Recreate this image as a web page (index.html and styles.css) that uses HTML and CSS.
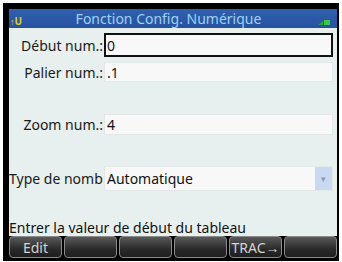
FILE: index.html
```html
<!DOCTYPE html>
<html lang="fr">
<head>
    <meta charset="UTF-8">
    <title>Fonction Config. Numérique</title>
    <link rel="stylesheet" href="styles.css">
</head>
<body>
    <div class="frame">
        <div class="screen">
            <div class="header">
                <span class="flags"><span class="shift">&#8593;</span>U</span>
                <span class="title">Fonction Config. Numérique</span>
                <svg class="batt" width="14" height="8" viewBox="0 0 14 8">
                    <polygon points="1,7 6,3 6,7" fill="#27a43c"/>
                    <rect x="7" y="2" width="6" height="5" fill="#3cc84a"/>
                </svg>
            </div>

            <div class="form">
                <div class="row row-first">
                    <label class="lbl">Début num.:</label>
                    <div class="field active">0</div>
                </div>
                <div class="row row-second">
                    <label class="lbl">Palier num.:</label>
                    <div class="field">.1</div>
                </div>
                <div class="row row-third">
                    <label class="lbl">Zoom num.:</label>
                    <div class="field">4</div>
                </div>
                <div class="row row-fourth">
                    <label class="lbl lbl-left">Type de nomb</label>
                    <div class="field select">
                        <span class="value">Automatique</span>
                        <span class="drop">&#9662;</span>
                    </div>
                </div>
            </div>

            <div class="status">Entrer la valeur de début du tableau</div>

            <div class="softkeys">
                <div class="key">Edit</div>
                <div class="key"></div>
                <div class="key"></div>
                <div class="key"></div>
                <div class="key">TRAC&#8594;</div>
                <div class="key"></div>
            </div>
        </div>
    </div>
</body>
</html>
```

FILE: styles.css
```css
/* General Styling */
body {
    margin: 0;
    background: #ffffff;
    font-family: 'Noto Sans', 'Open Sans', sans-serif;
}

.frame {
    margin: 3px 0 0 3px;
    width: 328px;
    background: #000;
    border-style: solid;
    border-color: #000;
    border-width: 6px 2px 3px 6px;
}

.screen {
    height: 249px;
    background: #e7efef;
    display: flex;
    flex-direction: column;
}

/* Header */
.header {
    height: 19px;
    background: linear-gradient(to bottom, #3160ae, #2652a0);
    display: flex;
    align-items: center;
    position: relative;
}

.flags {
    font-size: 10px;
    font-weight: bold;
    color: #d8d020;
    padding-left: 1px;
    padding-top: 4px;
    width: 60px;
}

.shift {
    font-size: 9px;
}

.title {
    flex: 1;
    text-align: center;
    color: #9fd2f6;
    font-size: 14px;
    margin-left: -50px;
}

.batt {
    margin: 6px 6px 0 0;
}

/* Form Styling */
.form {
    display: flex;
    flex-direction: column;
}

.row {
    display: flex;
    align-items: center;
}

.row-first {
    margin-top: 5px;
    height: 24px;
}

.row-second {
    margin-top: 5px;
    height: 20px;
}

.row-third {
    margin-top: 32px;
    height: 21px;
}

.row-fourth {
    margin-top: 31px;
    height: 25px;
}

.lbl {
    width: 94px;
    text-align: right;
    padding-right: 1px;
    font-size: 14px;
    color: #1a1a1a;
    white-space: nowrap;
    overflow: hidden;
}

.lbl-left {
    text-align: left;
}

.field {
    width: 229px;
    height: 100%;
    box-sizing: border-box;
    background: #f8f8f8;
    border: 1px solid #e2e8e8;
    font-size: 14px;
    color: #111;
    padding-left: 2px;
    display: flex;
    align-items: center;
}

.field.active {
    border: 2px solid #111;
    padding-left: 1px;
}

.select {
    padding-right: 0;
}

.select .value {
    flex: 1;
}

.select .drop {
    width: 17px;
    height: 100%;
    background: #c9d9f2;
    color: #8a9ab0;
    font-size: 9px;
    display: flex;
    align-items: center;
    justify-content: center;
}

/* Status line */
.status {
    margin-top: auto;
    font-size: 14px;
    color: #111;
    line-height: 16px;
}

/* Soft keys */
.softkeys {
    height: 22px;
    display: flex;
    gap: 2px;
    background: #000;
}

.key {
    flex: 1;
    border-radius: 4px;
    border: 1px solid #8a8a8a;
    background: linear-gradient(to bottom, #5a5a5a, #2a2a2a 60%, #1e1e1e);
    color: #d4d4d4;
    font-size: 14px;
    display: flex;
    align-items: center;
    justify-content: center;
}
```
